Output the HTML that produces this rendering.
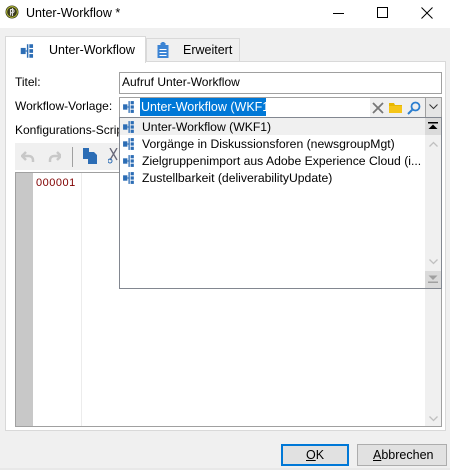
<!DOCTYPE html>
<html><head><meta charset="utf-8">
<style>
*{margin:0;padding:0;box-sizing:border-box}
body{width:450px;height:470px;position:relative;background:#f0f0f0;font-family:"Liberation Sans",Arial,sans-serif;font-size:12px;color:#000;overflow:hidden}
.a{position:absolute}
.t{white-space:nowrap}
</style></head><body>
<div class="a" style="left:0;top:0;width:450px;height:28px;background:#fff"></div>
<svg class="a" style="left:5px;top:5px" width="14" height="14" viewBox="0 0 14 14"><circle cx="7" cy="7" r="6.5" fill="#3b3b1e"/><circle cx="7" cy="7" r="5.3" fill="none" stroke="#c8d23a" stroke-width="0.8"/><path d="M5.5 10.5V4.5h2a1.6 1.6 0 0 1 0 3.2H5.5M7.5 3v8" stroke="#ddd" stroke-width="1.1" fill="none"/></svg>
<div class="a t" style="left:26px;top:6px;font-size:12.5px">Unter-Workflow *</div>
<div class="a" style="left:333px;top:13px;width:11px;height:1px;background:#000"></div>
<div class="a" style="left:377px;top:7px;width:11px;height:11px;border:1px solid #000"></div>
<svg class="a" style="left:421px;top:7px" width="12" height="12"><path d="M0.5 0.5L11.5 11.5M11.5 0.5L0.5 11.5" stroke="#000" stroke-width="1"/></svg>

<div class="a" style="left:5px;top:61px;width:441px;height:370px;background:#fff;border:1px solid #d9d9d9"></div>
<div class="a" style="left:5px;top:36px;width:141px;height:27px;background:#fff;border:1px solid #d9d9d9;border-bottom:none"></div>
<div class="a" style="left:146px;top:38px;width:94px;height:23px;background:#f0f0f0;border:1px solid #d9d9d9;border-bottom:none"></div>
<svg class="a" style="left:19px;top:43px" width="17" height="16" viewBox="0 0 11 13"><rect x="0" y="4" width="4" height="5" fill="#2c6db5"/><rect x="4" y="6" width="2" height="1" fill="#2c6db5"/><rect x="5" y="1" width="1.2" height="11" fill="#2c6db5"/><rect x="7" y="1" width="3" height="3" fill="#2c6db5"/><rect x="7" y="5" width="3" height="3" fill="#2c6db5"/><rect x="7" y="9" width="3" height="3" fill="#2c6db5"/></svg>
<div class="a t" style="left:49px;top:43px;font-size:12.5px">Unter-Workflow</div>
<svg class="a" style="left:157px;top:42px" width="12" height="16"><rect x="0.5" y="3" width="11" height="13" fill="#3c84d4"/><rect x="3.5" y="1" width="5" height="3" fill="#3c84d4"/><rect x="4.5" y="0" width="3" height="2" fill="#3c84d4"/><rect x="2.5" y="7" width="7" height="1" fill="#fff"/><rect x="2.5" y="10" width="7" height="1" fill="#fff"/><rect x="2.5" y="13" width="7" height="1" fill="#fff"/></svg>
<div class="a t" style="left:183px;top:43px;font-size:12.5px">Erweitert</div>

<div class="a t" style="left:15px;top:75px">Titel:</div>
<div class="a" style="left:119px;top:72px;width:323px;height:22px;border:1px solid #a0a0a0;background:#fff"></div>
<div class="a t" style="left:122px;top:75px">Aufruf Unter-Workflow</div>

<div class="a t" style="left:15px;top:99px">Workflow-Vorlage:</div>
<div class="a" style="left:119px;top:97px;width:323px;height:21px;border:1px solid #a0a0a0;background:#fff"></div>
<svg class="a" style="left:122px;top:100px" width="14" height="14" viewBox="0 0 11 13"><rect x="0" y="4" width="4" height="5" fill="#2c6db5"/><rect x="4" y="6" width="2" height="1" fill="#2c6db5"/><rect x="5" y="1" width="1.2" height="11" fill="#2c6db5"/><rect x="7" y="1" width="3" height="3" fill="#2c6db5"/><rect x="7" y="5" width="3" height="3" fill="#2c6db5"/><rect x="7" y="9" width="3" height="3" fill="#2c6db5"/></svg>
<div class="a t" style="left:140px;top:98px;height:18px;width:126px;background:#0078d7;color:#fff;font-size:12.5px;line-height:18px;padding-left:1px;overflow:hidden">Unter-Workflow (WKF1)</div>
<div class="a" style="left:370px;top:98px;width:55px;height:19px;background:#f0f0f0"></div>
<svg class="a" style="left:372px;top:102px" width="12" height="12"><path d="M1 1L11 11M11 1L1 11" stroke="#777" stroke-width="1.8"/></svg>
<svg class="a" style="left:389px;top:102px" width="13" height="11"><path d="M0 1h5l1 2h7v8H0z" fill="#e8b700"/><path d="M0 4h13v7H0z" fill="#f5c518"/></svg>
<svg class="a" style="left:407px;top:101px" width="14" height="14"><circle cx="8.5" cy="5.5" r="4" fill="none" stroke="#2c7fd0" stroke-width="1.8"/><path d="M5.5 8.5L1 13" stroke="#2c7fd0" stroke-width="2"/></svg>
<div class="a" style="left:425px;top:97px;width:17px;height:21px;background:#e5e5e5;border:1px solid #a0a0a0"></div>
<svg class="a" style="left:429px;top:104px" width="9" height="6"><path d="M0.5 0.5L4.5 4.5L8.5 0.5" stroke="#333" fill="none"/></svg>

<div class="a t" style="left:15px;top:123px">Konfigurations-Scrip</div>
<div class="a" style="left:15px;top:143px;width:104px;height:27px;background:#f0f0f0"></div>
<svg class="a" style="left:21px;top:150px" width="40" height="14"><path d="M5 2L1 6L5 10M1 6h7a4 4 0 0 1 4 4v2" stroke="#c8c8c8" stroke-width="2.5" fill="none"/><path d="M36 2L40 6L36 10M40 6h-7a4 4 0 0 0-4 4v2" stroke="#c8c8c8" stroke-width="2.5" fill="none"/></svg>
<div class="a" style="left:72px;top:147px;width:1px;height:20px;background:#a0a0a0"></div>
<svg class="a" style="left:83px;top:148px" width="15" height="16"><rect x="0" y="0" width="6" height="11" fill="#2c6db5"/><path d="M5 4h6l3 3v9H5z" fill="#2c6db5"/></svg>
<svg class="a" style="left:108px;top:148px" width="11" height="16"><path d="M2 0L9 12M9 0L2 12" stroke="#667" stroke-width="1.3"/><circle cx="2" cy="13" r="2" fill="none" stroke="#2c6db5"/></svg>

<div class="a" style="left:15px;top:172px;width:427px;height:255px;border:1px solid #a0a0a0;background:#fff"></div>
<div class="a" style="left:16px;top:173px;width:17px;height:253px;background:#c8c8c8"></div>
<div class="a" style="left:81px;top:173px;width:1px;height:253px;background:#ececec"></div>
<div class="a t" style="left:36px;top:177px;color:#800000;font-size:11px;letter-spacing:0.5px">000001</div>
<div class="a" style="left:425px;top:173px;width:16px;height:253px;background:#f0f0f0"></div>
<svg class="a" style="left:429px;top:416px" width="9" height="6"><path d="M0.5 0.5L4.5 4.5L8.5 0.5" stroke="#c0c0c0" fill="none" stroke-width="1.3"/></svg>

<div class="a" style="left:119px;top:117px;width:323px;height:172px;border:1px solid #828790;background:#fff"></div>
<div class="a" style="left:120px;top:118px;width:305px;height:17px;background:#f0f0f0"></div>
<div class="a" style="left:425px;top:118px;width:16px;height:170px;background:#f0f0f0"></div>
<div class="a" style="left:425px;top:118px;width:16px;height:17px;background:#dadada"></div>
<svg class="a" style="left:428px;top:122px" width="10" height="8"><rect x="0" y="0" width="10" height="1.5" fill="#000"/><path d="M5 2.5L9.5 7H0.5z" fill="#000"/></svg>
<svg class="a" style="left:429px;top:141px" width="9" height="6"><path d="M0.5 5.5L4.5 1.5L8.5 5.5" stroke="#c0c0c0" fill="none" stroke-width="1.3"/></svg>
<svg class="a" style="left:429px;top:259px" width="9" height="6"><path d="M0.5 0.5L4.5 4.5L8.5 0.5" stroke="#c0c0c0" fill="none" stroke-width="1.3"/></svg>
<div class="a" style="left:425px;top:271px;width:16px;height:17px;background:#dadada"></div>
<svg class="a" style="left:428px;top:275px" width="10" height="8"><path d="M0.5 0.5H9.5L5 5z" fill="#a0a0a0"/><rect x="0" y="6.5" width="10" height="1.5" fill="#a0a0a0"/></svg>

<div class="a" style="left:122px;top:120px">
<svg width="14" height="14" viewBox="0 0 11 13" style="position:absolute;left:0;top:0"><rect x="0" y="4" width="4" height="5" fill="#2c6db5"/><rect x="4" y="6" width="2" height="1" fill="#2c6db5"/><rect x="5" y="1" width="1.2" height="11" fill="#2c6db5"/><rect x="7" y="1" width="3" height="3" fill="#2c6db5"/><rect x="7" y="5" width="3" height="3" fill="#2c6db5"/><rect x="7" y="9" width="3" height="3" fill="#2c6db5"/></svg>
<svg width="14" height="14" viewBox="0 0 11 13" style="position:absolute;left:0;top:17px"><rect x="0" y="4" width="4" height="5" fill="#2c6db5"/><rect x="4" y="6" width="2" height="1" fill="#2c6db5"/><rect x="5" y="1" width="1.2" height="11" fill="#2c6db5"/><rect x="7" y="1" width="3" height="3" fill="#2c6db5"/><rect x="7" y="5" width="3" height="3" fill="#2c6db5"/><rect x="7" y="9" width="3" height="3" fill="#2c6db5"/></svg>
<svg width="14" height="14" viewBox="0 0 11 13" style="position:absolute;left:0;top:34px"><rect x="0" y="4" width="4" height="5" fill="#2c6db5"/><rect x="4" y="6" width="2" height="1" fill="#2c6db5"/><rect x="5" y="1" width="1.2" height="11" fill="#2c6db5"/><rect x="7" y="1" width="3" height="3" fill="#2c6db5"/><rect x="7" y="5" width="3" height="3" fill="#2c6db5"/><rect x="7" y="9" width="3" height="3" fill="#2c6db5"/></svg>
<svg width="14" height="14" viewBox="0 0 11 13" style="position:absolute;left:0;top:51px"><rect x="0" y="4" width="4" height="5" fill="#2c6db5"/><rect x="4" y="6" width="2" height="1" fill="#2c6db5"/><rect x="5" y="1" width="1.2" height="11" fill="#2c6db5"/><rect x="7" y="1" width="3" height="3" fill="#2c6db5"/><rect x="7" y="5" width="3" height="3" fill="#2c6db5"/><rect x="7" y="9" width="3" height="3" fill="#2c6db5"/></svg>
</div>
<div class="a t" style="left:142px;top:119px;font-size:12.2px;line-height:17px">Unter-Workflow (WKF1)<br>Vorgänge in Diskussionsforen (newsgroupMgt)<br>Zielgruppenimport aus Adobe Experience Cloud (i...<br>Zustellbarkeit (deliverabilityUpdate)</div>

<div class="a" style="left:281px;top:444px;width:68px;height:22px;border:2px solid #0078d7;background:#e1e1e1"></div>
<div class="a t" style="left:306px;top:448px;font-size:12.5px"><u>O</u>K</div>
<div class="a" style="left:357px;top:444px;width:90px;height:22px;border:1px solid #adadad;background:#e1e1e1"></div>
<div class="a t" style="left:373px;top:448px;font-size:12.5px"><u>A</u>bbrechen</div>
<div class="a" style="left:0;top:468px;width:450px;height:2px;background:#e8e8e8"></div>
</body></html>
